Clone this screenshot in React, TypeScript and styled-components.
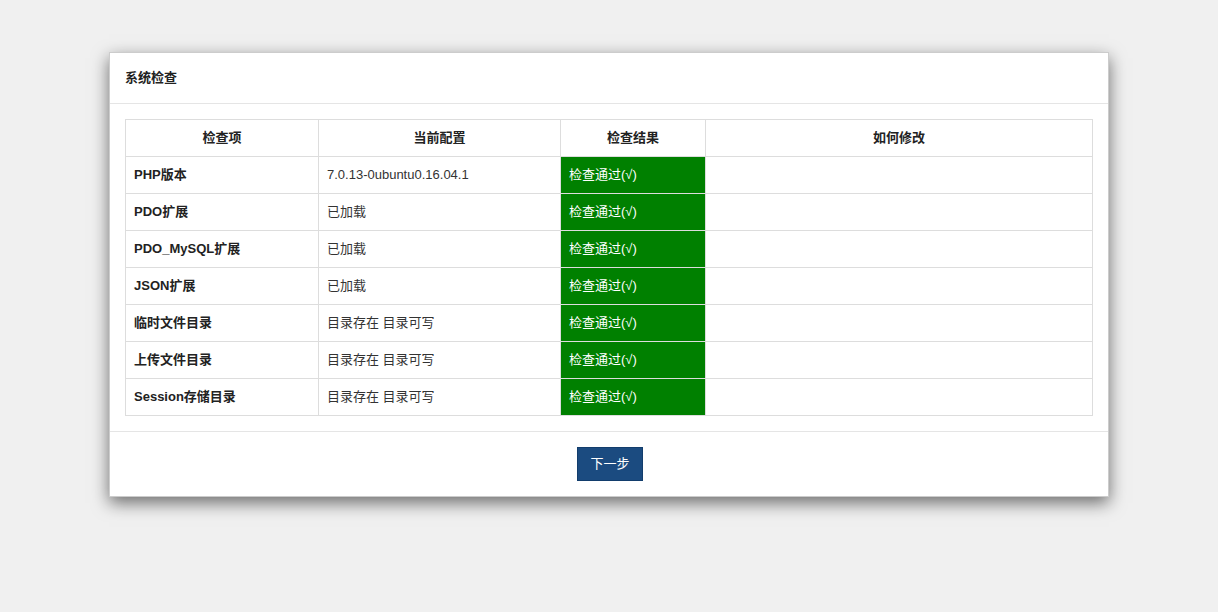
import React from "react";
import styled, { createGlobalStyle } from "styled-components";

const GlobalStyle = createGlobalStyle`
  html, body { margin: 0; padding: 0; background: #f0f0f0; }
  body {
    font-family: "Liberation Sans", Arial, "Noto Sans CJK SC", sans-serif;
    font-size: 13px;
    color: #333;
  }
`;

const Page = styled.div`
  box-sizing: border-box;
  min-height: 100vh;
  padding-top: 52px;
  display: flex;
  align-items: flex-start;
  justify-content: center;
`;

const Panel = styled.div`
  width: 1000px;
  box-sizing: border-box;
  background: #fff;
  border: 1px solid rgba(0, 0, 0, 0.2);
  box-shadow: 0 6px 16px rgba(0, 0, 0, 0.55);
`;

const Header = styled.div`
  padding: 15px;
  border-bottom: 1px solid #e5e5e5;
`;

const Title = styled.h4`
  margin: 0;
  font-size: 13px;
  line-height: 20px;
  font-weight: bold;
  color: #222;
`;

const Body = styled.div`
  padding: 15px;
`;

const Table = styled.table`
  width: 100%;
  border-collapse: collapse;
  border-spacing: 0;
  border: 1px solid #ddd;
  table-layout: fixed;
`;

const Th = styled.th`
  border: 1px solid #ddd;
  padding: 8px;
  line-height: 20px;
  font-size: 13px;
  font-weight: bold;
  text-align: center;
  color: #222;
`;

const Td = styled.td<{ $bold?: boolean; $ok?: boolean }>`
  border: 1px solid #ddd;
  padding: 8px;
  line-height: 20px;
  font-size: 13px;
  text-align: left;
  font-weight: ${(p) => (p.$bold ? "bold" : "normal")};
  color: ${(p) => (p.$ok ? "#fff" : p.$bold ? "#222" : "#333")};
  background: ${(p) => (p.$ok ? "#008000" : "transparent")};
`;

const Footer = styled.div`
  padding: 15px 14px 15px 16px;
  border-top: 1px solid #e5e5e5;
  display: flex;
  justify-content: center;
`;

const Button = styled.button`
  font-family: inherit;
  font-size: 13px;
  line-height: 20px;
  padding: 6px 12px;
  color: #fff;
  background: #1b4b80;
  border: 1px solid #123d6c;
  border-radius: 0;
  cursor: pointer;
`;

const rows: [string, string][] = [
  ["PHP版本", "7.0.13-0ubuntu0.16.04.1"],
  ["PDO扩展", "已加载"],
  ["PDO_MySQL扩展", "已加载"],
  ["JSON扩展", "已加载"],
  ["临时文件目录", "目录存在 目录可写"],
  ["上传文件目录", "目录存在 目录可写"],
  ["Session存储目录", "目录存在 目录可写"],
];

export default function App() {
  return (
    <>
      <GlobalStyle />
      <Page>
        <Panel>
          <Header>
            <Title>系统检查</Title>
          </Header>
          <Body>
            <Table>
              <colgroup>
                <col style={{ width: 193 }} />
                <col style={{ width: 242 }} />
                <col style={{ width: 145 }} />
                <col />
              </colgroup>
              <thead>
                <tr>
                  <Th>检查项</Th>
                  <Th>当前配置</Th>
                  <Th>检查结果</Th>
                  <Th>如何修改</Th>
                </tr>
              </thead>
              <tbody>
                {rows.map(([name, value]) => (
                  <tr key={name}>
                    <Td $bold>{name}</Td>
                    <Td>{value}</Td>
                    <Td $ok>检查通过(√)</Td>
                    <Td></Td>
                  </tr>
                ))}
              </tbody>
            </Table>
          </Body>
          <Footer>
            <Button>下一步</Button>
          </Footer>
        </Panel>
      </Page>
    </>
  );
}
